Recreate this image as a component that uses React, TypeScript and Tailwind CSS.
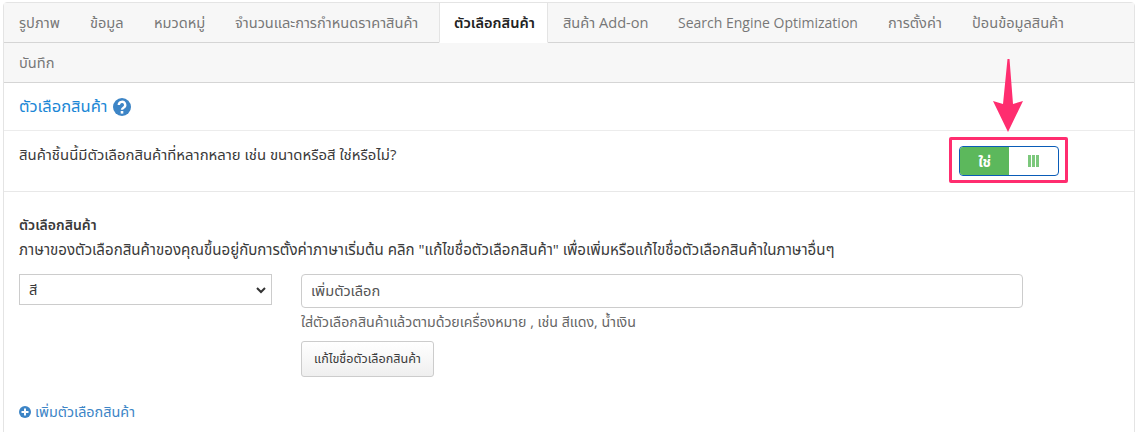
import React from "react";

const tabs = [
  { t: "รูปภาพ", w: "w-[71px]" },
  { t: "ข้อมูล", w: "w-[64px]" },
  { t: "หมวดหมู่", w: "w-[81px]" },
  { t: "จำนวนและการกำหนดราคาสินค้า", w: "w-[219px]" },
  { t: "ตัวเลือกสินค้า", w: "w-[109px]" },
  { t: "สินค้า Add-on", w: "w-[115px]" },
  { t: "Search Engine Optimization", w: "w-[210px]" },
  { t: "การตั้งค่า", w: "w-[84px]" },
  { t: "ป้อนข้อมูลสินค้า", w: "grow" },
  { t: "บันทึก", w: "w-full" },
];

export default function App() {
  return (
    <div className="relative h-[432px] w-[1138px] overflow-hidden bg-white pl-[3px] pt-[2px] pr-[3px] text-[14.6px] text-[#3a3a3a] font-['Open_Sans','Noto_Sans','Noto_Sans_Thai','DejaVu_Sans',sans-serif]">
      <div className="h-[440px] rounded-t-[4px] border border-[#e4e4e4]">
        <div className="flex flex-wrap bg-[#f7f7f7]">
          {tabs.map((x, i) => (
            <div key={x.t} className={`h-10 whitespace-nowrap border-b border-[#d5d5d5] leading-[39px] ${x.w} ${i === 4 ? "border-x border-x-[#e4e4e4] border-b-white bg-white pl-[14px] font-semibold text-[#222]" : "pl-[15px] text-[#777]"} ${i === 6 ? "text-[14px]" : ""}`}>{x.t}</div>
          ))}
        </div>
        <div className="flex h-[48px] items-center gap-[5px] border-b border-[#ececec] pl-[15px] text-[16.500px] text-[#1b87d6]">
          ตัวเลือกสินค้า
          <svg width="18" height="18" viewBox="0 0 18 18"><circle cx="9" cy="9" r="9" fill="#3d85c6" /><path d="M5.800 7a3.200 3.200 0 1 1 4.700 2.800C9.500 10.400 9 10.800 9 11.800" fill="none" stroke="#fff" strokeWidth="2.400" /><rect x="7.700" y="13" width="2.600" height="2.600" fill="#fff" /></svg>
        </div>
        <div className="flex h-[61px] justify-between border-b border-[#e8e8e8] pl-[15px] pr-[75px]">
          <div className="pt-[12px] text-[14.900px]">สินค้าชิ้นนี้มีตัวเลือกสินค้าที่หลากหลาย เช่น ขนาดหรือสี ใช่หรือไม่?</div>
          <div className="mt-[15px] flex h-[30px] w-[100px] overflow-hidden rounded-[4px] border border-[#0a5cb8]">
            <div className="flex w-[49px] items-center justify-center bg-[#5cb85c] text-[14px] font-bold text-white">ใช่</div>
            <div className="flex flex-1 items-center justify-center gap-[1px]"><span className="h-[12px] w-[3px] bg-[#7cc87c]" /><span className="h-[12px] w-[3px] bg-[#7cc87c]" /><span className="h-[12px] w-[3px] bg-[#7cc87c]" /></div>
          </div>
        </div>
        <div className="pl-[15px] pt-[21px]">
          <div className="text-[14px] font-semibold leading-[24px]">ตัวเลือกสินค้า</div>
          <div className="whitespace-nowrap text-[15.100px] leading-[24px]">ภาษาของตัวเลือกสินค้าของคุณขึ้นอยู่กับการตั้งค่าภาษาเริ่มต้น คลิก "แก้ไขชื่อตัวเลือกสินค้า" เพื่อเพิ่มหรือแก้ไขชื่อตัวเลือกสินค้าในภาษาอื่นๆ</div>
          <div className="mt-[13px] flex gap-[29px]">
            <div className="flex h-[31px] w-[253px] items-center justify-between border border-[#ccc] pl-[9px] pr-[4px]">
              <span>สี</span>
              <svg width="12" height="12" viewBox="0 0 12 12"><path d="M2 4l4 4 4-4" fill="none" stroke="#333" strokeWidth="2" /></svg>
            </div>
            <div className="w-[722px]">
              <div className="flex h-[34px] items-center rounded-[4px] border border-[#ccc] pl-[9px] text-[#555]">เพิ่มตัวเลือก</div>
              <div className="mt-[4px] whitespace-nowrap text-[14.200px] leading-[20px] text-[#666]">ใส่ตัวเลือกสินค้าแล้วตามด้วยเครื่องหมาย , เช่น สีแดง, น้ำเงิน</div>
              <div className="mt-[9px] flex h-[36px] w-[133px] items-center justify-center rounded-[3px] border border-[#ccc] bg-gradient-to-b from-white to-[#efefef] text-[12.600px]">แก้ไขชื่อตัวเลือกสินค้า</div>
            </div>
          </div>
          <div className="mt-[24px] flex items-center gap-[4px] text-[14.400px] text-[#3d85c6]">
            <svg width="12" height="12" viewBox="0 0 12 12"><circle cx="6" cy="6" r="6" fill="#3d85c6" /><path d="M6 2.500v7M2.500 6h7" stroke="#fff" strokeWidth="2" /></svg>
            เพิ่มตัวเลือกสินค้า
          </div>
        </div>
      </div>
      <div className="absolute left-[949px] top-[137px] h-[46px] w-[119px] rounded-[2px] border-[3px] border-[#ff2d6f]" />
      <svg className="absolute left-[988px] top-[58px]" width="40" height="76" viewBox="0 0 40 76"><path d="M19.500 1h2L25 46l10-3-15 31L5 43l10 3z" fill="#ff2d6f" /></svg>
    </div>
  );
}
